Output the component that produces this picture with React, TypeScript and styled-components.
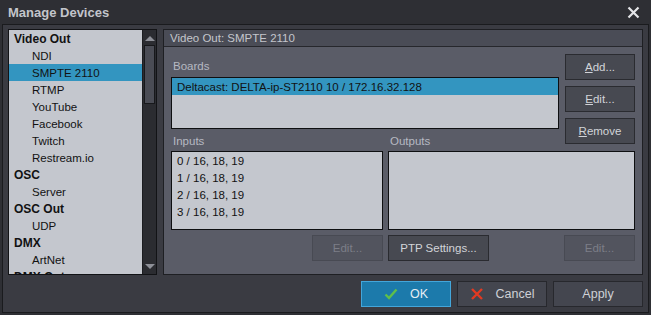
import React from "react";
import styled, { createGlobalStyle, css } from "styled-components";

const Global = createGlobalStyle`
  html, body { margin: 0; padding: 0; background: #2e2f34; }
  body { font-family: "Liberation Sans", Arial, sans-serif; font-size: 11px; }
  * { box-sizing: border-box; }
`;

const Window = styled.div`
  width: 651px;
  height: 315px;
  display: flex;
  flex-direction: column;
  background: #2e2f34;
  overflow: hidden;
`;

const TitleBar = styled.div`
  height: 24px;
  flex: none;
  display: flex;
  align-items: center;
  justify-content: space-between;
  padding: 0 11px 0 8px;
  color: #c3c5cb;
  font-weight: bold;
  font-size: 13px;
`;

const CloseIcon = styled.svg`
  width: 13px;
  height: 13px;
  display: block;
`;

const Main = styled.div`
  flex: 1;
  margin: 0 2px 2px 2px;
  border: 1px solid #1a1b1e;
  background: #3a3b42;
  padding: 4px 5px 5px 5px;
  display: flex;
  flex-direction: column;
`;

const ContentRow = styled.div`
  height: 246px;
  display: flex;
  gap: 6px;
`;

const Tree = styled.div`
  width: 149px;
  border: 1px solid #121316;
  display: flex;
  background: #c4c7ce;
`;

const TreeList = styled.div`
  flex: 1;
  overflow: hidden;
  display: flex;
  flex-direction: column;
`;

const TreeRow = styled.div<{ $header?: boolean; $selected?: boolean }>`
  height: 17px;
  flex: none;
  line-height: 18px;
  white-space: nowrap;
  color: #121212;
  padding-left: ${(p) => (p.$header ? "5px" : "23px")};
  font-weight: ${(p) => (p.$header ? "bold" : "normal")};
  font-size: ${(p) => (p.$header ? "12px" : "11.5px")};
  ${(p) =>
    p.$selected &&
    css`
      background: #3395c0;
    `}
`;

const ScrollBar = styled.div`
  width: 14px;
  background: #2b2c31;
  border-left: 1px solid #1c1d21;
  display: flex;
  flex-direction: column;
  align-items: center;
  padding: 6px 0 5px;
`;

const Arrow = styled.div<{ $down?: boolean }>`
  width: 0;
  height: 0;
  border-left: 5px solid transparent;
  border-right: 5px solid transparent;
  ${(p) =>
    p.$down
      ? css`border-top: 5px solid #8e9098;`
      : css`border-bottom: 5px solid #8e9098;`}
`;

const Thumb = styled.div`
  width: 11px;
  height: 59px;
  margin-top: 4px;
  background: #4a4c55;
  border: 1px solid #17181b;
`;

const Spacer = styled.div`
  flex: 1;
`;

const Panel = styled.div`
  flex: 1;
  border: 1px solid #1e1f23;
  background: #5a5c67;
  display: flex;
  flex-direction: column;
`;

const PanelHeader = styled.div`
  height: 17px;
  flex: none;
  background: #4a4c56;
  border-bottom: 1px solid #26272c;
  color: #c4c6cc;
  padding-left: 6px;
  line-height: 17px;
  font-size: 11.5px;
`;

const PanelBody = styled.div`
  flex: 1;
  padding: 7px 6px 13px 7px;
  display: grid;
  grid-template-columns: 212px 171px 71px;
  column-gap: 5px;
  grid-template-rows: 23px 52px 22px 79px 31px;
`;

const Label = styled.div<{ $col: string; $row: string }>`
  grid-column: ${(p) => p.$col};
  grid-row: ${(p) => p.$row};
  color: #b6b9c2;
  font-size: 11.5px;
  padding-left: 2px;
  align-self: center;
  margin-top: 1px;
`;

const ListBox = styled.div<{ $col: string; $row: string }>`
  grid-column: ${(p) => p.$col};
  grid-row: ${(p) => p.$row};
  background: #c4c7ce;
  border: 1px solid #0e0f11;
  overflow: hidden;
`;

const ListRow = styled.div<{ $selected?: boolean }>`
  height: 17px;
  line-height: 18px;
  padding-left: 5px;
  color: #121212;
  white-space: nowrap;
  font-size: 11.5px;
  ${(p) => p.$selected && css`background: #3395c0;`}
`;

const SideButtons = styled.div`
  grid-column: 3;
  grid-row: 1 / 4;
  margin-left: 1px;
  display: flex;
  flex-direction: column;
  gap: 6px;
`;

const Button = styled.button<{ $disabled?: boolean; $w?: number }>`
  height: 26px;
  width: ${(p) => (p.$w ? `${p.$w}px` : "100%")};
  background: #474951;
  border: 1px solid #2a2b30;
  color: #d2d4d9;
  font-family: "Liberation Sans", Arial, sans-serif;
  font-size: 11.5px;
  padding: 0;
  display: flex;
  align-items: center;
  justify-content: center;
  ${(p) =>
    p.$disabled &&
    css`
      background: #52545e;
      border-color: #484a53;
      color: #7c7e88;
    `}
`;

const BottomCell = styled.div<{ $col: string; $justify: string }>`
  grid-column: ${(p) => p.$col};
  grid-row: 5;
  display: flex;
  align-items: flex-end;
  justify-content: ${(p) => p.$justify};
`;

const Footer = styled.div`
  margin-top: 6px;
  display: flex;
  justify-content: flex-end;
  gap: 6px;
`;

const DialogButton = styled.button<{ $primary?: boolean }>`
  width: 90px;
  height: 26px;
  background: #44464f;
  border: 1px solid #27282d;
  color: #cfd1d6;
  font-family: "Liberation Sans", Arial, sans-serif;
  font-size: 12.5px;
  padding: 0;
  display: flex;
  align-items: center;
  justify-content: center;
  gap: 12px;
  ${(p) =>
    p.$primary &&
    css`
      background: #1c7aab;
      border-color: #44a6da;
      color: #e6eef3;
    `}
`;

const Icon = styled.svg`
  width: 14px;
  height: 14px;
  display: block;
`;

const treeItems: { text: string; header?: boolean; selected?: boolean }[] = [
  { text: "Video Out", header: true },
  { text: "NDI" },
  { text: "SMPTE 2110", selected: true },
  { text: "RTMP" },
  { text: "YouTube" },
  { text: "Facebook" },
  { text: "Twitch" },
  { text: "Restream.io" },
  { text: "OSC", header: true },
  { text: "Server" },
  { text: "OSC Out", header: true },
  { text: "UDP" },
  { text: "DMX", header: true },
  { text: "ArtNet" },
  { text: "DMX Out", header: true },
];

const inputs = ["0 / 16, 18, 19", "1 / 16, 18, 19", "2 / 16, 18, 19", "3 / 16, 18, 19"];

export default function App() {
  return (
    <>
      <Global />
      <Window>
        <TitleBar>
          <span>Manage Devices</span>
          <CloseIcon viewBox="0 0 13 13">
            <path d="M1.5 1.5 L11.5 11.5 M11.5 1.5 L1.5 11.5" stroke="#e4e5e8" strokeWidth="2.2" />
          </CloseIcon>
        </TitleBar>
        <Main>
          <ContentRow>
            <Tree>
              <TreeList>
                {treeItems.map((t) => (
                  <TreeRow key={t.text} $header={t.header} $selected={t.selected}>
                    {t.text}
                  </TreeRow>
                ))}
              </TreeList>
              <ScrollBar>
                <Arrow />
                <Thumb />
                <Spacer />
                <Arrow $down />
              </ScrollBar>
            </Tree>
            <Panel>
              <PanelHeader>Video Out: SMPTE 2110</PanelHeader>
              <PanelBody>
                <Label $col="1 / 3" $row="1">Boards</Label>
                <ListBox $col="1 / 3" $row="2">
                  <ListRow $selected>Deltacast: DELTA-ip-ST2110 10 / 172.16.32.128</ListRow>
                </ListBox>
                <SideButtons>
                  <Button>
                    <u>A</u>dd...
                  </Button>
                  <Button>
                    <u>E</u>dit...
                  </Button>
                  <Button>
                    <u>R</u>emove
                  </Button>
                </SideButtons>
                <Label $col="1" $row="3">Inputs</Label>
                <Label $col="2" $row="3">Outputs</Label>
                <ListBox $col="1" $row="4">
                  {inputs.map((i) => (
                    <ListRow key={i}>{i}</ListRow>
                  ))}
                </ListBox>
                <ListBox $col="2 / 4" $row="4" />
                <BottomCell $col="1" $justify="flex-end">
                  <Button $disabled $w={71}>Edit...</Button>
                </BottomCell>
                <BottomCell $col="2" $justify="flex-start">
                  <Button $w={101}>PTP Settings...</Button>
                </BottomCell>
                <BottomCell $col="3" $justify="flex-end">
                  <Button $disabled $w={71}>Edit...</Button>
                </BottomCell>
              </PanelBody>
            </Panel>
          </ContentRow>
          <Footer>
            <DialogButton $primary>
              <Icon viewBox="0 0 14 14">
                <path d="M1.5 7.5 L5 11 L12.5 2.5" fill="none" stroke="#5fbf4a" strokeWidth="2.4" />
              </Icon>
              OK
            </DialogButton>
            <DialogButton>
              <Icon viewBox="0 0 14 14">
                <path d="M2 2 L12 12 M12 2 L2 12" stroke="#e23a22" strokeWidth="2.4" />
              </Icon>
              Cancel
            </DialogButton>
            <DialogButton>Apply</DialogButton>
          </Footer>
        </Main>
      </Window>
    </>
  );
}
